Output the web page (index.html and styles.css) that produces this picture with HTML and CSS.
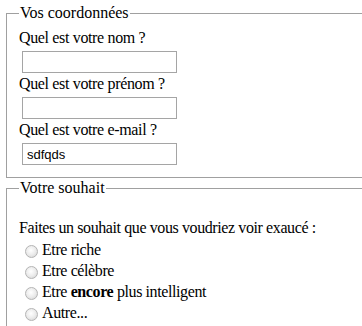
FILE: index.html
```html
<!DOCTYPE html>
<html lang="fr">
<head>
    <meta charset="UTF-8">
    <title>Formulaire</title>
    <link rel="stylesheet" href="styles.css">
</head>
<body>
<form class="wish-form">
    <fieldset class="group">
        <legend>Vos coordonnées</legend>
        <label class="field-label" for="nom">Quel est votre nom ?</label>
        <input class="text-input" type="text" id="nom" name="nom">
        <label class="field-label" for="prenom">Quel est votre prénom ?</label>
        <input class="text-input" type="text" id="prenom" name="prenom">
        <label class="field-label" for="email">Quel est votre e-mail ?</label>
        <input class="text-input" type="text" id="email" name="email" value="sdfqds">
    </fieldset>

    <fieldset class="group group-wish">
        <legend>Votre souhait</legend>
        <p class="intro">Faites un souhait que vous voudriez voir exaucé :</p>
        <label class="choice"><input type="radio" name="souhait" value="riche"><span>Etre riche</span></label>
        <label class="choice"><input type="radio" name="souhait" value="celebre"><span>Etre célèbre</span></label>
        <label class="choice"><input type="radio" name="souhait" value="intelligent"><span>Etre <strong>encore</strong> plus intelligent</span></label>
        <label class="choice"><input type="radio" name="souhait" value="autre"><span>Autre...</span></label>
    </fieldset>
</form>
</body>
</html>
```

FILE: styles.css
```css
/* Mise en page generale */
html, body {
    overflow: hidden;
}
body {
    margin: 0;
    padding: 4px 0 0 6px;
    font-family: "Liberation Serif", "Times New Roman", serif;
    font-size: 16px;
    color: #000;
    background: #fff;
}
.group {
    margin: 0;
    width: 420px;
    border: 1px solid #a0a0a0;
    padding: 7px 12px 10px;
}
.group legend {
    padding: 0 1px;
    line-height: 18px;
}
.field-label {
    display: block;
    line-height: 18px;
    letter-spacing: -0.35px;
}
.text-input {
    display: block;
    box-sizing: border-box;
    width: 155px;
    height: 22px;
    margin: 4px 0 2px 3px;
    padding: 0 4px;
    border: 1px solid #a5a5a5;
    font-family: "Liberation Sans", Arial, sans-serif;
    font-size: 13px;
    outline: none;
}
.group-wish {
    margin-top: 1px;
    padding-top: 6px;
    padding-bottom: 4px;
}
.intro {
    margin: 16px 0 2px;
    line-height: 18px;
    letter-spacing: -0.4px;
}
.choice {
    display: flex;
    align-items: center;
    height: 21px;
    letter-spacing: -0.4px;
}
.choice input {
    appearance: none;
    -webkit-appearance: none;
    box-sizing: border-box;
    width: 13px;
    height: 13px;
    margin: 3px 4px 0 6px;
    border: 1px solid #b4b4b4;
    border-radius: 50%;
    background: radial-gradient(circle at 45% 40%, #ffffff 0%, #ececec 50%, #cfcfcf 100%);
}
```
